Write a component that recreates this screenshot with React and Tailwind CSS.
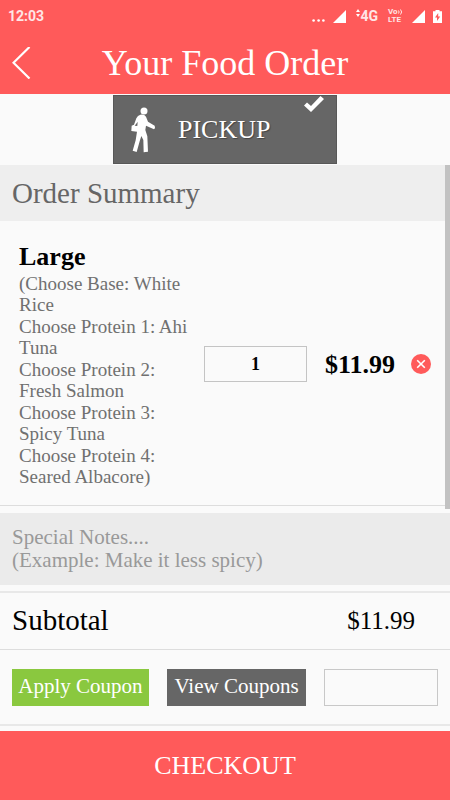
const choices = [
  '(Choose Base: White Rice',
  'Choose Protein 1: Ahi Tuna',
  'Choose Protein 2: Fresh Salmon',
  'Choose Protein 3: Spicy Tuna',
  'Choose Protein 4: Seared Albacore)',
];

function Signal() {
  return (
    <svg className="h-[13px] w-[13px]" viewBox="0 0 12 12" fill="white" aria-hidden="true">
      <path d="M12 0V12H0Z" />
    </svg>
  );
}

function StatusBar() {
  return (
    <div className="flex h-8 items-center pl-2 pr-2 font-['Roboto',sans-serif] text-white/85">
      <span className="text-sm font-bold">12:03</span>
      <div className="ml-auto flex items-center">
        <svg className="mr-2 h-3 w-[13px]" viewBox="0 0 13 12" fill="white" aria-hidden="true">
          <circle cx="1.6" cy="10.5" r="1.3" />
          <circle cx="6.6" cy="10.5" r="1.3" />
          <circle cx="11.4" cy="10.5" r="1.3" />
        </svg>
        <Signal />
        <svg className="mb-1.5 ml-2.5 h-2 w-1" viewBox="0 0 4 8" fill="white" aria-hidden="true">
          <path d="M0 3 2 0 4 3ZM0 5H4L2 8Z" />
        </svg>
        <span className="text-sm font-bold">4G</span>
        <span className="ml-2.5 flex w-4 flex-col text-[8px] font-bold leading-[8px]">
          <span className="flex items-center">
            Vo
            <svg className="h-[6px] w-[5px]" viewBox="0 0 5 6" fill="none" stroke="currentColor" aria-hidden="true">
              <path d="M.5 1.5Q1.7 3 .5 4.5M2.5.5Q4.8 3 2.5 5.5" />
            </svg>
          </span>
          <span>LTE</span>
        </span>
        <span className="ml-2 flex">
          <Signal />
        </span>
        <svg className="ml-2 h-[13px] w-[9px]" viewBox="0 0 9 12" preserveAspectRatio="none" aria-hidden="true">
          <path d="M2.5 0h4v1.2H9V12H0V1.2h2.5Z" fill="white" />
          <path d="M5.2 2.8 2 7h2v3.2L7.2 6h-2Z" fill="#ff5a5a" />
        </svg>
      </div>
    </div>
  );
}

function Walker() {
  return (
    <svg className="h-[46px] w-[26px]" viewBox="90 63 78 138" fill="currentColor" aria-hidden="true">
      <circle cx="132" cy="75" r="10.5" />
      <path d="M121 86Q133 84 138 92L144 107 164 119Q167 126 162 130L138 119 136 132 142 151 144 197 131 199 130 162 124 150 119 166 110 198 98 194 107 163 111 137 94 135 95 119 102 116 109 97Q113 88 121 86Z" />
      <path d="M113 107 104 119 112 120Z" fill="#666" />
    </svg>
  );
}

export default function App() {
  return (
    <div className="flex min-h-screen flex-col bg-[#fafafa] font-['Liberation_Serif',serif] text-black">
      <header className="bg-[#ff5a5a] text-white">
        <StatusBar />
        <div className="flex h-[62px] items-center px-3">
          <button type="button" aria-label="Back" className="w-12">
            <svg className="h-8 w-5" viewBox="0 0 20 32" fill="none" stroke="currentColor" strokeWidth="2.2" aria-hidden="true">
              <path d="M17.5 0 1.5 15.8 17.5 31.5" />
            </svg>
          </button>
          <h1 className="flex-1 pr-12 text-center text-[36px] leading-[62px]">Your Food Order</h1>
        </div>
      </header>

      <div className="flex justify-center pb-px pt-px">
        <button
          type="button"
          aria-pressed="true"
          className="relative flex h-[69px] w-56 items-center border border-[#585858] bg-[#666] pl-4 text-white"
        >
          <Walker />
          <span className="ml-[22px] text-[26px] [text-shadow:1px_1px_1px_#444]">PICKUP</span>
          <svg className="absolute right-3 top-0 h-4 w-5" viewBox="0 0 20 16" fill="currentColor" aria-hidden="true">
            <path d="M0 9.5 3 6.5 7 10 16.5 0 20 3 7 16Z" />
          </svg>
        </button>
      </div>

      <main className="relative">
        <div className="absolute right-0 top-0 h-[344px] w-[5px] bg-[#c2c2c2]" />
        <h2 className="bg-[#eee] px-3 text-[29px] leading-[56px] text-[#666]">Order Summary</h2>

        <section className="flex items-center border-b border-[#ddd] pb-[18px] pl-[19px] pr-[19px] pt-5">
          <div className="w-[177px] shrink-0">
            <h3 className="text-[26px] font-bold leading-[32px]">Large</h3>
            <div className="flex flex-col gap-px text-[19px] leading-[21px] text-[#707070]">
              {choices.map((choice) => (
                <p key={choice}>{choice}</p>
              ))}
            </div>
          </div>
          <input
            aria-label="Quantity"
            defaultValue="1"
            className="ml-2 h-9 w-[103px] border border-[#c4c4c4] text-center text-lg font-bold"
          />
          <span className="ml-auto text-[26px] font-bold">$11.99</span>
          <button type="button" aria-label="Remove item" className="ml-4">
            <svg className="h-5 w-5" viewBox="0 0 20 20" aria-hidden="true">
              <circle cx="10" cy="10" r="10" fill="#ff5a5a" />
              <path d="m6.2 6.2 7.6 7.6m0-7.6-7.6 7.6" stroke="white" strokeWidth="1.6" />
            </svg>
          </button>
        </section>

        <textarea
          aria-label="Special notes"
          placeholder={'Special Notes....\n(Example: Make it less spicy)'}
          className="mb-1.5 mt-[7px] block h-[72px] w-full resize-none bg-[#ebebeb] px-3 py-[13px] text-[21px] leading-[23px] placeholder:text-[#999]"
        />

        <div className="flex h-[59px] items-center justify-between border-b border-t-2 border-b-[#ddd] border-t-[#e8e8e8] pl-3 pr-[35px]">
          <span className="text-[29px]">Subtotal</span>
          <span className="text-[25px]">$11.99</span>
        </div>

        <div className="flex h-[76px] items-center gap-[18px] border-b-2 border-[#e8e8e8] px-3">
          <button type="button" className="h-[37px] w-[137px] whitespace-nowrap bg-[#8ac83f] text-[21px] text-white">
            Apply Coupon
          </button>
          <button type="button" className="h-[37px] w-[139px] whitespace-nowrap bg-[#666] text-[21px] text-white">
            View Coupons
          </button>
          <input aria-label="Coupon code" className="h-[37px] min-w-0 flex-1 border border-[#c8c8c8] px-2 text-lg" />
        </div>
      </main>

      <button type="button" className="mt-auto h-[69px] w-full bg-[#ff5a5a] text-[26px] text-white">
        CHECKOUT
      </button>
    </div>
  );
}
